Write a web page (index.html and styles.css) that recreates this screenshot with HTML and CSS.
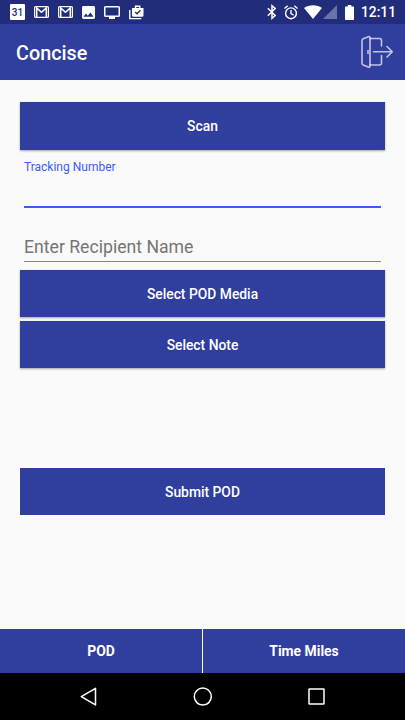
FILE: index.html
```html
<!DOCTYPE html>
<html lang="en">

<head>
    <meta charset="UTF-8">
    <meta name="viewport" content="width=device-width, initial-scale=1.0">
    <title>Concise</title>
    <link rel="stylesheet" href="styles.css">
</head>

<body>

    <div class="status-bar">
        <div class="notifications">
            <div class="calendar">31</div>
            <svg class="mail" width="15" height="12" viewBox="0 0 15 12">
                <rect x=".6" y=".6" width="13.800" height="10.800" rx="1" fill="none" stroke="#fff" stroke-width="1.200"/>
                <path fill="none" stroke="#fff" stroke-width="1.500" d="M2.700 11V2L7.500 6.200 12.300 2V11"/>
            </svg>
            <svg class="mail" width="15" height="12" viewBox="0 0 15 12">
                <rect x=".6" y=".6" width="13.800" height="10.800" rx="1" fill="none" stroke="#fff" stroke-width="1.200"/>
                <path fill="none" stroke="#fff" stroke-width="1.500" d="M2.700 11V2L7.500 6.200 12.300 2V11"/>
            </svg>
            <svg class="photo" width="13" height="13" viewBox="3 3 18 18">
                <path fill="#fff" d="M21 19V5c0-1.100-.9-2-2-2H5c-1.100 0-2 .9-2 2v14c0 1.100.9 2 2 2h14c1.100 0 2-.9 2-2zM8.500 13.500l2.500 3.010L14.500 12l4.500 6H5l3.500-4.500z"/>
            </svg>
            <svg class="screen" width="16" height="13" viewBox="0 0 16 13">
                <path fill="#fff" fill-rule="evenodd" d="M1.500 0h13A1.500 1.500 0 0 1 16 1.500v8a1.500 1.500 0 0 1-1.500 1.500H11v2H5v-2H1.500A1.500 1.500 0 0 1 0 9.500v-8A1.500 1.500 0 0 1 1.500 0zM1.500 1.500v8h13v-8z"/>
            </svg>
            <svg class="shop" width="15" height="15" viewBox="0 0 15 15">
                <path fill="none" stroke="#fff" stroke-width="1.400" d="M.8 5v8.600h11.500M6.500 3.500V1.300h4.300v2.200"/>
                <path fill="#fff" d="M3 3h11.500v7.500a1.200 1.200 0 0 1-1.200 1.200H4.200A1.200 1.200 0 0 1 3 10.500z"/>
                <path fill="none" stroke="#212c7b" stroke-width="1.300" d="M6.200 7l1.800 1.800L11.500 5.200"/>
            </svg>
        </div>
        <div class="system">
            <svg width="10" height="16" viewBox="0 0 10 16">
                <path fill="none" stroke="#fff" stroke-width="1.500" d="M.8 4.300L8.200 11.500 5 14.300V1.700L8.200 4.500.8 11.700"/>
            </svg>
            <svg class="alarm" width="14" height="15" viewBox="0 0 14 15">
                <g fill="none" stroke="#fff" stroke-width="1.400">
                    <circle cx="7" cy="8.300" r="5.400"/>
                    <path d="M7 5v3.600l2.600 1.600M.5 3.500L3.700.8M13.500 3.500L10.300.8"/>
                </g>
            </svg>
            <svg class="wifi" width="18" height="14" viewBox="0 0 18 14">
                <path fill="#fff" d="M9 14L0 3C5-.8 13-.8 18 3z"/>
            </svg>
            <svg class="signal" width="14" height="14" viewBox="0 0 14 14">
                <path fill="#6b72a9" d="M14 0v14H0z"/>
            </svg>
            <svg class="battery" width="9" height="15" viewBox="0 0 9 15">
                <path fill="#fff" d="M2.700 0h3.600v1.500h1.900a.8.8 0 0 1 .8.8v11.900a.8.8 0 0 1-.8.8H.8a.8.8 0 0 1-.8-.8V2.300a.8.8 0 0 1 .8-.8h1.900z"/>
            </svg>
            <span class="clock">12:11</span>
        </div>
    </div>

    <header class="app-bar">
        <h1>Concise</h1>
        <svg class="logout" width="34" height="34" viewBox="0 0 34 34">
            <g fill="none" stroke="#fff" stroke-opacity=".7" stroke-width="1.600" stroke-linejoin="round" stroke-linecap="round">
                <path d="M2 5.500Q2 4.200 3.200 3.700L8.300 1.700Q10 1 10 2.700V31Q10 32.700 8.300 32L3.200 30Q2 29.500 2 28.200z"/>
                <path d="M10 3.500h9.500a2 2 0 0 1 2 2v5.500M21.500 20.500v7.500a2 2 0 0 1-2 2H10"/>
                <path d="M8 15.500v3"/>
                <path d="M13.500 16.800H32M27 11.500l5.300 5.300L27 22"/>
            </g>
        </svg>
    </header>

    <form class="content">
        <button type="button" class="scan">Scan</button>

        <div class="field tracking">
            <label for="trackingNumber">Tracking Number</label>
            <input type="text" id="trackingNumber">
        </div>

        <div class="field recipient">
            <input type="text" id="recipientName" placeholder="Enter Recipient Name">
        </div>

        <button type="button">Select POD Media</button>
        <button type="button" class="note">Select Note</button>
        <button type="button" class="submit">Submit POD</button>
    </form>

    <nav class="tabs">
        <a class="tab">POD</a>
        <a class="tab">Time Miles</a>
    </nav>

    <div class="nav-bar">
        <svg width="20" height="20" viewBox="0 0 20 20">
            <path d="M16.500 1.300v16.600L2.300 9.600z"/>
        </svg>
        <svg width="20" height="20" viewBox="0 0 20 20">
            <circle cx="9.800" cy="9.600" r="8.500"/>
        </svg>
        <svg width="20" height="20" viewBox="0 0 20 20">
            <rect x="2" y="2" width="15" height="15" rx=".5"/>
        </svg>
    </div>

</body>

</html>
```

FILE: styles.css
```css
* {
    box-sizing: border-box;
}

body {
    display: flex;
    flex-direction: column;
    height: 720px;
    margin: 0;
    font-family: Roboto, sans-serif;
    background-color: #fafafa;
    overflow: hidden;
}

svg {
    display: block;
    flex: none;
}

.status-bar {
    display: flex;
    justify-content: space-between;
    height: 24px;
    padding: 0 9px 0 10px;
    background-color: #212c7b;
}

.notifications,
.system {
    display: flex;
    align-items: center;
}

.calendar {
    width: 15px;
    height: 16px;
    margin-right: 9px;
    border-radius: 1px;
    background-color: #fff;
    color: #212c7b;
    font-size: 10px;
    font-weight: 500;
    line-height: 18px;
    text-align: center;
}

.mail,
.photo,
.screen {
    margin-right: 9px;
}

.alarm {
    margin-left: 7px;
}

.wifi {
    margin-left: 6px;
}

.signal {
    margin-left: 1px;
}

.battery {
    margin-left: 8px;
}

.clock {
    margin-left: 7px;
    color: #fff;
    font-size: 13.8px;
    font-weight: 500;
}

.app-bar {
    display: flex;
    align-items: center;
    justify-content: space-between;
    height: 56.4px;
    padding: 0 11px 0 16px;
    background-color: #303e9e;
}

.app-bar h1 {
    margin: 0;
    padding-top: 2px;
    color: #fff;
    font-size: 19.8px;
    font-weight: 500;
}

.content {
    display: flex;
    flex: 1;
    flex-direction: column;
    padding: 22px 20px 0;
}

button {
    flex: none;
    height: 47.4px;
    padding: 1px 0 0;
    border: none;
    background-color: #303e9e;
    color: #fff;
    font-family: inherit;
    font-size: 13.85px;
    font-weight: 500;
    box-shadow: 0 1px 2px rgba(0, 0, 0, 0.35);
}

.scan {
    padding-top: 0;
}

.note {
    margin-top: 3.6px;
}

.submit {
    margin-top: 99.6px;
    box-shadow: none;
}

.field {
    display: flex;
    flex-direction: column;
    margin: 0 4px;
}

.field label {
    color: #3d5afe;
    font-size: 12px;
    line-height: 14px;
}

.field input {
    width: 100%;
    padding: 0;
    border: none;
    border-radius: 0;
    outline: none;
    background: none;
    font-family: inherit;
    font-size: 17.65px;
}

.field input::placeholder {
    color: #757575;
}

.tracking {
    padding-top: 10px;
}

.tracking input {
    height: 34px;
    border-bottom: 2px solid #3d5afe;
}

.recipient {
    padding: 24px 0 7.8px;
}

.recipient input {
    height: 30px;
    padding-top: 2px;
    border-bottom: 1px solid #858585;
}

.tabs {
    display: grid;
    grid-template-columns: 1fr 1fr;
    gap: 1px;
    height: 44.5px;
    background-color: #fafafa;
}

.tab {
    display: flex;
    align-items: center;
    justify-content: center;
    background-color: #303e9e;
    color: #fff;
    font-size: 13.9px;
    font-weight: 700;
}

.nav-bar {
    display: flex;
    align-items: center;
    justify-content: center;
    gap: 94px;
    height: 47px;
    background-color: #000;
}

.nav-bar svg {
    fill: none;
    stroke: #fff;
    stroke-width: 1.5;
    stroke-linejoin: round;
}
```
